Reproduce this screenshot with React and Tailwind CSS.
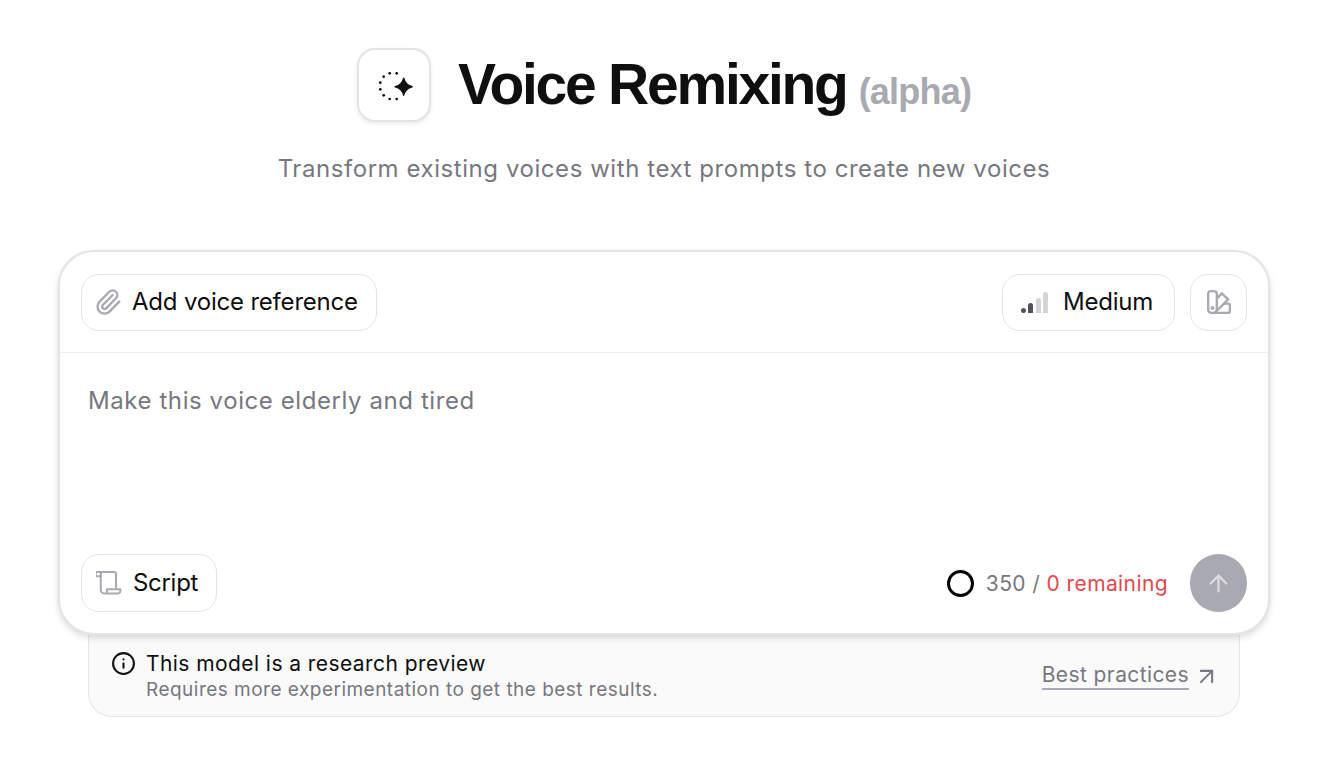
import { ArrowUp, ArrowUpRight, Info, Paperclip } from "lucide-react";

const dots = [
  [20.7, 6.3], [13.7, 6.3], [7.7, 9.7], [4.3, 15.7], [4.3, 22.3], [7.7, 28.3], [13.7, 32], [20.7, 32],
];

function SparkIcon() {
  return (
    <svg viewBox="-1 -1 38 38" className="h-[38px] w-[38px]">
      {dots.map(([cx, cy]) => (
        <circle key={`${cx}-${cy}`} cx={cx} cy={cy} r="1.35" fill="#111" />
      ))}
      <path d="M27.7 11.2q1.6 7 8.5 8.5q-6.9 1.5-8.5 8.5q-1.6-7-8.5-8.5q6.9-1.5 8.5-8.5z" fill="#111" stroke="#111" strokeWidth="1.4" strokeLinejoin="round" />
    </svg>
  );
}

function ScriptIcon() {
  return (
    <svg viewBox="0 0 26 26" fill="none" stroke="#a9a9b2" strokeWidth="2" strokeLinecap="round" strokeLinejoin="round" className="h-[26px] w-[26px]">
      <path d="M1.5 2h16.5a2 2 0 0 1 2 2v14" />
      <path d="M1.5 2a2.2 2.2 0 0 0-.4 4.3H5" />
      <path d="M4.8 2.4V20a3.4 3.4 0 0 0 3.4 3.4H22a2.6 2.6 0 0 0 2.4-2.4v-1.8H11v2a2.2 2.2 0 0 1-2.2 2.2" />
    </svg>
  );
}

function SwatchIcon() {
  return (
    <svg viewBox="0 0 24 24" fill="none" stroke="#a9a9b2" strokeWidth="2.2" strokeLinecap="round" strokeLinejoin="round" className="h-[26px] w-[26px]">
      <path d="M2 4.5A2.5 2.5 0 0 1 4.5 2h3A2.5 2.5 0 0 1 10 4.5V19a3 3 0 0 1-3 3H5a3 3 0 0 1-3-3z" />
      <path d="M10 9l4.5-5 6 5.5L9 21" />
      <path d="M7 22h13.5a1.5 1.5 0 0 0 1.5-1.5V15a1.5 1.5 0 0 0-1.5-1.5h-3" />
      <circle cx="6" cy="17.5" r="0.7" fill="#a9a9b2" />
    </svg>
  );
}

function SignalIcon() {
  return (
    <div className="flex h-[21px] w-[27px] items-end justify-between">
      <span className="h-[5px] w-[5px] rounded-full bg-[#52525b]" />
      <span className="h-[10px] w-[5px] rounded-t-full rounded-b-[1px] bg-[#52525b]" />
      <span className="h-[15px] w-[5px] rounded-t-full rounded-b-[1px] bg-[#d4d4d8]" />
      <span className="h-[21px] w-[5px] rounded-t-full rounded-b-[1px] bg-[#d4d4d8]" />
    </div>
  );
}

export default function App() {
  return (
    <div className="flex min-h-screen flex-col items-center bg-white pt-[48px] pl-[2px] font-['Inter',sans-serif] text-[#0f0f0f] [font-optical-sizing:none]">
      <div className="flex items-center">
        <div className="flex h-[74px] w-[74px] items-center justify-center rounded-[18px] border-2 border-[#e4e4e7] bg-white shadow-[0_2px_4px_rgba(0,0,0,0.08)]">
          <SparkIcon />
        </div>
        <h1 className="ml-[27px] pb-[3px] font-['Liberation_Sans',sans-serif] text-[57px] leading-[68px] font-bold tracking-[-2.25px] whitespace-nowrap">
          Voice Remixing
        </h1>
        <span className="mt-[14px] ml-[12px] font-['Liberation_Sans',sans-serif] text-[36px] font-bold tracking-[-0.8px] text-[#a9a9b2]">
          (alpha)
        </span>
      </div>
      <p className="mt-[28px] text-[24px] leading-[38px] tracking-[0.56px] text-[#77777f]">
        Transform existing voices with text prompts to create new voices
      </p>

      <div className="relative z-10 mt-[62px] w-[1212px] rounded-[36px] border-2 border-[#e4e4e7] bg-white shadow-[0_3px_6px_rgba(0,0,0,0.14)]">
        <div className="flex h-[101px] items-center justify-between border-b border-[#ececef] px-[21px]">
          <button className="flex h-[57px] items-center gap-[10px] rounded-[18px] border border-[#e4e4e7] pr-[18px] pl-[12px] text-[24px] font-[430] tracking-[-0.2px]">
            <Paperclip className="h-[28px] w-[28px] text-[#a9a9b2]" strokeWidth={2} />
            Add voice reference
          </button>
          <div className="flex items-center gap-[15px]">
            <button className="flex h-[57px] items-center gap-[15px] rounded-[18px] border border-[#e4e4e7] pr-[21px] pl-[18px] text-[24px] font-[430] tracking-[-0.24px]">
              <SignalIcon />
              Medium
            </button>
            <button className="flex h-[57px] w-[57px] items-center justify-center rounded-[18px] border border-[#e4e4e7]">
              <SwatchIcon />
            </button>
          </div>
        </div>
        <div className="h-[201px] px-[28px] pt-[30px] text-[24px] leading-[36px] tracking-[0.58px] text-[#77777f]">
          Make this voice elderly and tired
        </div>
        <div className="flex h-[79px] items-start justify-between px-[21px]">
          <button className="flex h-[58px] items-center gap-[11px] rounded-[18px] border border-[#e4e4e7] pr-[18px] pl-[14px] text-[24px] font-[430] tracking-[-0.3px]">
            <ScriptIcon />
            Script
          </button>
          <div className="flex h-[58px] items-center">
            <span className="h-[27px] w-[27px] rounded-full border-[3px] border-black" />
            <span className="ml-[12px] pt-[2px] text-[21px] tracking-[0.4px] text-[#77777f]">
              350 / <span className="text-[#e5484d]">0 remaining</span>
            </span>
            <button className="ml-[22px] flex h-[58px] w-[57px] items-center justify-center rounded-full bg-[#a9a9b2]">
              <ArrowUp className="h-[27px] w-[27px] text-[#dcdce0]" strokeWidth={2} />
            </button>
          </div>
        </div>
      </div>

      <div className="flex h-[82px] w-[1152px] items-center justify-between rounded-b-[24px] border border-t-0 border-[#e4e4e7] bg-[#fafafa] pr-[19px] pl-[22px]">
        <div className="flex items-start gap-[10px]">
          <Info className="mt-[1px] h-[25px] w-[25px] text-[#111]" strokeWidth={2} />
          <div>
            <p className="text-[21px] leading-[27px] font-[430] tracking-[0.43px]">This model is a research preview</p>
            <p className="text-[19px] leading-[25px] tracking-[0.48px] text-[#77777f]">Requires more experimentation to get the best results.</p>
          </div>
        </div>
        <a className="flex items-center gap-[4px] pt-[1px] text-[21px] font-[430] tracking-[0.4px] text-[#77777f]">
          <span className="border-b-2 border-[#a9a9b2] leading-[26px]">Best practices</span>
          <ArrowUpRight className="h-[27px] w-[27px]" strokeWidth={1.8} />
        </a>
      </div>
    </div>
  );
}
